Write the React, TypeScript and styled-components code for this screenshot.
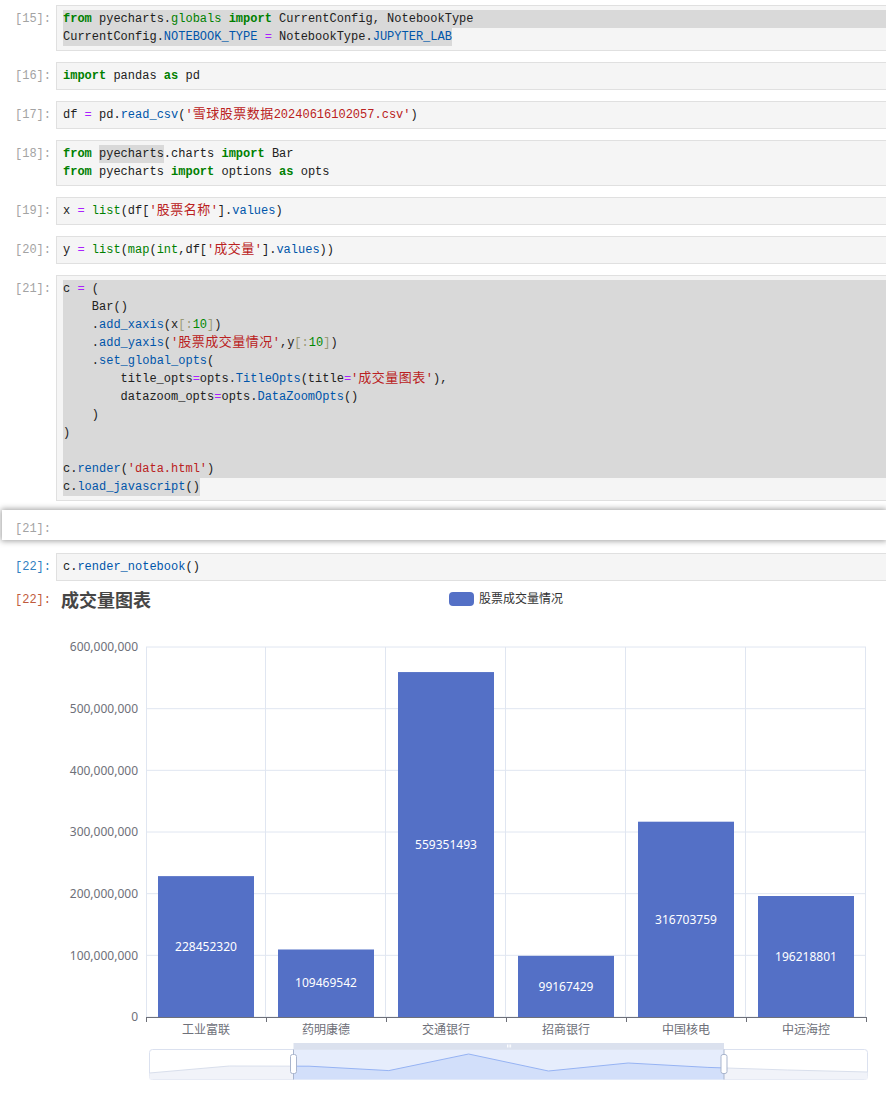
import React from 'react';
import styled, { createGlobalStyle } from 'styled-components';

const MONO = `"Liberation Mono", "DejaVu Sans Mono", "Noto Sans CJK SC", monospace`;
const SANS = `"Noto Sans", "Noto Sans CJK SC", sans-serif`;

const GlobalStyle = createGlobalStyle`
  html, body { margin: 0; padding: 0; background: #ffffff; overflow: hidden; }
  body { font-family: ${MONO}; }
`;

const Notebook = styled.div`
  display: flex;
  flex-direction: column;
  width: 886px;
  padding-top: 5px;
`;

const Cell = styled.div<{ $mt?: number }>`
  display: flex;
  align-items: flex-start;
  margin-top: ${(p) => p.$mt ?? 0}px;
`;

type PromptKind = 'idle' | 'in' | 'out';

const Prompt = styled.div<{ $kind: PromptKind; $pt?: number; $w?: number }>`
  flex: 0 0 ${(p) => p.$w ?? 56}px;
  box-sizing: border-box;
  padding-right: 5px;
  padding-top: ${(p) => p.$pt ?? 5}px;
  text-align: right;
  font-family: ${MONO};
  font-size: 12px;
  line-height: 18px;
  color: ${(p) => (p.$kind === 'in' ? '#307fc1' : p.$kind === 'out' ? '#bf5b3d' : '#a3a3a3')};
`;

const Editor = styled.div`
  flex: 1;
  min-width: 0;
  border: 1px solid #e0e0e0;
  border-right: none;
  background: #f5f5f5;
  padding: 4px 0 4px 6px;
  font-family: ${MONO};
  font-size: 12px;
  line-height: 18px;
`;

const Line = styled.div<{ $sel: boolean }>`
  white-space: pre;
  height: 18px;
  background: ${(p) => (p.$sel ? '#d9d9d9' : 'transparent')};
`;

const Sel = styled.span`
  display: inline-block;
  height: 18px;
  vertical-align: top;
  background: #d9d9d9;
`;

type Kind = 'kw' | 'bi' | 'var' | 'prop' | 'op' | 'str' | 'num' | 'br' | 'pun';

const COLORS: Record<Kind, string> = {
  kw: '#008000',
  bi: '#008000',
  var: '#212121',
  prop: '#0055aa',
  op: '#aa22ff',
  str: '#ba2121',
  num: '#008800',
  br: '#999977',
  pun: '#212121',
};

const Tok = styled.span<{ $k: Kind }>`
  color: ${(p) => COLORS[p.$k]};
  font-weight: ${(p) => (p.$k === 'kw' ? 700 : 400)};
`;

const Cjk = styled.span`
  font-family: "Noto Sans CJK SC", sans-serif;
  font-size: 13px;
  line-height: 1;
  letter-spacing: 0.5px;
`;

const GhostRow = styled.div`
  display: flex;
  margin-top: 9px;
  margin-left: 2px;
  height: 30px;
  background: #ffffff;
  box-shadow: 0 0 6px 1px rgba(0, 0, 0, 0.38);
`;

const ChartSvg = styled.svg`
  display: block;
  flex: 0 0 830px;
`;

const KW = new Set(['from', 'import', 'as']);
const BI = new Set(['globals', 'list', 'map', 'int']);

function withCjk(text: string, keyBase: string) {
  const parts = text.split(/([\u3400-\u9fff]+)/);
  return parts.map((s, i) =>
    /[\u3400-\u9fff]/.test(s) ? <Cjk key={keyBase + i}>{s}</Cjk> : <React.Fragment key={keyBase + i}>{s}</React.Fragment>
  );
}

function tokenize(line: string, brackets: boolean): { t: string; k: Kind }[] {
  const re = /('[^']*')|(\d+)|([A-Za-z_]\w*)|(=)|(\s+)|(.)/g;
  const fromLine = /^\s*(from|import)\b/.test(line);
  const out: { t: string; k: Kind }[] = [];
  let prevDot = false;
  let m: RegExpExecArray | null;
  while ((m = re.exec(line))) {
    const t = m[0];
    let k: Kind = 'pun';
    if (m[1]) k = 'str';
    else if (m[2]) k = 'num';
    else if (m[3]) {
      if (KW.has(t)) k = 'kw';
      else if (BI.has(t)) k = 'bi';
      else if (prevDot && !fromLine) k = 'prop';
      else k = 'var';
    } else if (m[4]) k = 'op';
    else if (brackets && /[\[\]:]/.test(t)) k = 'br';
    out.push({ t, k });
    if (!m[5]) prevDot = t === '.';
  }
  return out;
}

type SelMode = 'none' | 'full' | 'text';
type CodeLine = { text: string; sel?: SelMode; mark?: string };
type CellData = { n: number; lines: CodeLine[]; brackets?: boolean; mt: number };

const CodeRow: React.FC<{ line: CodeLine; brackets?: boolean }> = ({ line, brackets }) => {
  const toks = tokenize(line.text, !!brackets);
  let marked = false;
  const content = toks.map((tk, i) => {
    const node = (
      <Tok key={i} $k={tk.k}>
        {withCjk(tk.t, 't' + i)}
      </Tok>
    );
    if (line.mark && !marked && tk.t === line.mark) {
      marked = true;
      return <Sel key={'m' + i}>{node}</Sel>;
    }
    return node;
  });
  return (
    <Line $sel={line.sel === 'full'}>
      {line.sel === 'text' ? <Sel>{content}</Sel> : content}
    </Line>
  );
};

const cells: CellData[] = [
  {
    n: 15,
    mt: 0,
    lines: [
      { text: 'from pyecharts.globals import CurrentConfig, NotebookType', sel: 'full' },
      { text: 'CurrentConfig.NOTEBOOK_TYPE = NotebookType.JUPYTER_LAB', sel: 'text' },
    ],
  },
  { n: 16, mt: 11, lines: [{ text: 'import pandas as pd' }] },
  { n: 17, mt: 11, lines: [{ text: "df = pd.read_csv('雪球股票数据20240616102057.csv')" }] },
  {
    n: 18,
    mt: 11,
    lines: [
      { text: 'from pyecharts.charts import Bar', mark: 'pyecharts' },
      { text: 'from pyecharts import options as opts' },
    ],
  },
  { n: 19, mt: 11, lines: [{ text: "x = list(df['股票名称'].values)" }] },
  { n: 20, mt: 11, lines: [{ text: "y = list(map(int,df['成交量'].values))" }] },
  {
    n: 21,
    mt: 11,
    brackets: true,
    lines: [
      { text: 'c = (', sel: 'full' },
      { text: '    Bar()', sel: 'full' },
      { text: '    .add_xaxis(x[:10])', sel: 'full' },
      { text: "    .add_yaxis('股票成交量情况',y[:10])", sel: 'full' },
      { text: '    .set_global_opts(', sel: 'full' },
      { text: "        title_opts=opts.TitleOpts(title='成交量图表'),", sel: 'full' },
      { text: '        datazoom_opts=opts.DataZoomOpts()', sel: 'full' },
      { text: '    )', sel: 'full' },
      { text: ')', sel: 'full' },
      { text: '', sel: 'full' },
      { text: "c.render('data.html')", sel: 'full' },
      { text: 'c.load_javascript()', sel: 'text' },
    ],
  },
];

/* ---------- chart ---------- */
const cats = ['工业富联', '药明康德', '交通银行', '招商银行', '中国核电', '中远海控'];
const vals = [228452320, 109469542, 559351493, 99167429, 316703759, 196218801];
const GX0 = 146;
const GX1 = 866;
const GY0 = 647;
const GY1 = 1017;
const MAX = 600000000;
const COLW = (GX1 - GX0) / cats.length;
const yOf = (v: number) => GY1 - (v / MAX) * (GY1 - GY0);
const yTicks = [0, 1, 2, 3, 4, 5, 6].map((k) => k * 100000000);
const fmt = (n: number) => n.toLocaleString('en-US');

const SX0 = 149.5;
const SX1 = 867.5;
const SY0 = 1049.5;
const SY1 = 1079.5;
const SEL0 = 293.5;
const SEL1 = 724;
const shadowY = [1073, 1066, 1066.2, 1070.6, 1054, 1071, 1063, 1067.4, 1070, 1072];
const shadowPts = shadowY.map((y, i) => [SX0 + (i * (SX1 - SX0)) / (shadowY.length - 1), y] as const);
const shadowLine = shadowPts.map(([x, y], i) => `${i ? 'L' : 'M'}${x.toFixed(1)} ${y}`).join(' ');
const shadowArea = `M${SX0} ${SY1} ` + shadowPts.map(([x, y]) => `L${x.toFixed(1)} ${y}`).join(' ') + ` L${SX1} ${SY1} Z`;

const Chart: React.FC = () => (
  <ChartSvg width={830} height={514} viewBox="56 585 830 514">
    <defs>
      <clipPath id="selClip">
        <rect x={SEL0} y={SY0} width={SEL1 - SEL0} height={SY1 - SY0} />
      </clipPath>
    </defs>
    {/* title */}
    <text x={61} y={606.5} fontFamily={SANS} fontSize={18} fontWeight={700} fill="#464646">
      成交量图表
    </text>
    {/* legend */}
    <rect x={449} y={592} width={25} height={14} rx={4} fill="#5470c6" />
    <text x={479} y={602.5} fontFamily={SANS} fontSize={12} fill="#333333">
      股票成交量情况
    </text>
    {/* grid */}
    {yTicks.map((v) => (
      <line key={'h' + v} x1={GX0} x2={GX1} y1={yOf(v)} y2={yOf(v)} stroke="#e0e6f1" strokeWidth={1} />
    ))}
    {cats.map((_, k) => (
      <line key={'v' + k} x1={GX0 + (k + 1) * COLW - 0.5} x2={GX0 + (k + 1) * COLW - 0.5} y1={GY0} y2={GY1} stroke="#e0e6f1" />
    ))}
    <line x1={GX0 + 0.5} x2={GX0 + 0.5} y1={GY0} y2={GY1} stroke="#e0e6f1" />
    {/* y labels */}
    {yTicks.map((v) => (
      <text key={'yl' + v} x={138} y={yOf(v) + 4.2} textAnchor="end" fontFamily={SANS} fontSize={12} fill="#6e7079">
        {fmt(v)}
      </text>
    ))}
    {/* bars */}
    {vals.map((v, k) => {
      const top = yOf(v);
      const x = GX0 + k * COLW + 12;
      return (
        <g key={'b' + k}>
          <rect x={x} y={top} width={96} height={GY1 - top} fill="#5470c6" />
          <text x={x + 48} y={(top + GY1) / 2 + 4.2} textAnchor="middle" fontFamily={SANS} fontSize={12} fill="#ffffff">
            {v}
          </text>
        </g>
      );
    })}
    {/* x axis */}
    <line x1={GX0} x2={GX1} y1={GY1 + 0.5} y2={GY1 + 0.5} stroke="#6e7079" />
    {[0, 1, 2, 3, 4, 5, 6].map((k) => (
      <line key={'t' + k} x1={GX0 + k * COLW + 0.5} x2={GX0 + k * COLW + 0.5} y1={GY1} y2={GY1 + 5} stroke="#6e7079" />
    ))}
    {cats.map((c, k) => (
      <text key={'xl' + k} x={GX0 + k * COLW + COLW / 2} y={1033.5} textAnchor="middle" fontFamily={SANS} fontSize={12} fill="#6e7079">
        {c}
      </text>
    ))}
    {/* data zoom */}
    <rect x={SX0} y={SY0} width={SX1 - SX0} height={SY1 - SY0} rx={3} fill="#ffffff" stroke="#dbe1ef" />
    <path d={shadowArea} fill="#f1f3f9" />
    <path d={shadowLine} fill="none" stroke="#d9dfec" />
    <rect x={SEL0} y={SY0} width={SEL1 - SEL0} height={SY1 - SY0} fill="#e6edfc" />
    <g clipPath="url(#selClip)">
      <path d={shadowArea} fill="#d2dffa" />
      <path d={shadowLine} fill="none" stroke="#96b3f3" />
    </g>
    <rect x={SEL0} y={1043} width={SEL1 - SEL0} height={6.5} fill="#dbe1ee" />
    {[0, 1, 2].map((i) => (
      <rect key={'g' + i} x={507 + i * 1.6} y={1044.5} width={0.9} height={3} fill="#ffffff" />
    ))}
    <line x1={SEL0} x2={SEL0} y1={SY0} y2={SY1} stroke="#a9b5cd" />
    <line x1={SEL1} x2={SEL1} y1={SY0} y2={SY1} stroke="#a9b5cd" />
    <rect x={SEL0 - 3} y={1054.5} width={6} height={19} rx={2} fill="#ffffff" stroke="#a9b5cd" />
    <rect x={SEL1 - 3} y={1054.5} width={6} height={19} rx={2} fill="#ffffff" stroke="#a9b5cd" />
  </ChartSvg>
);

export default function App() {
  return (
    <>
      <GlobalStyle />
      <Notebook>
        {cells.map((c) => (
          <Cell key={c.n} $mt={c.mt}>
            <Prompt $kind="idle">[{c.n}]:</Prompt>
            <Editor>
              {c.lines.map((l, i) => (
                <CodeRow key={i} line={l} brackets={c.brackets} />
              ))}
            </Editor>
          </Cell>
        ))}
        <GhostRow>
          <Prompt $kind="idle" $pt={10} $w={54}>
            [21]:
          </Prompt>
        </GhostRow>
        <Cell $mt={13}>
          <Prompt $kind="in">[22]:</Prompt>
          <Editor>
            <CodeRow line={{ text: 'c.render_notebook()' }} />
          </Editor>
        </Cell>
        <Cell $mt={4}>
          <Prompt $kind="out" $pt={6}>
            [22]:
          </Prompt>
          <Chart />
        </Cell>
      </Notebook>
    </>
  );
}
